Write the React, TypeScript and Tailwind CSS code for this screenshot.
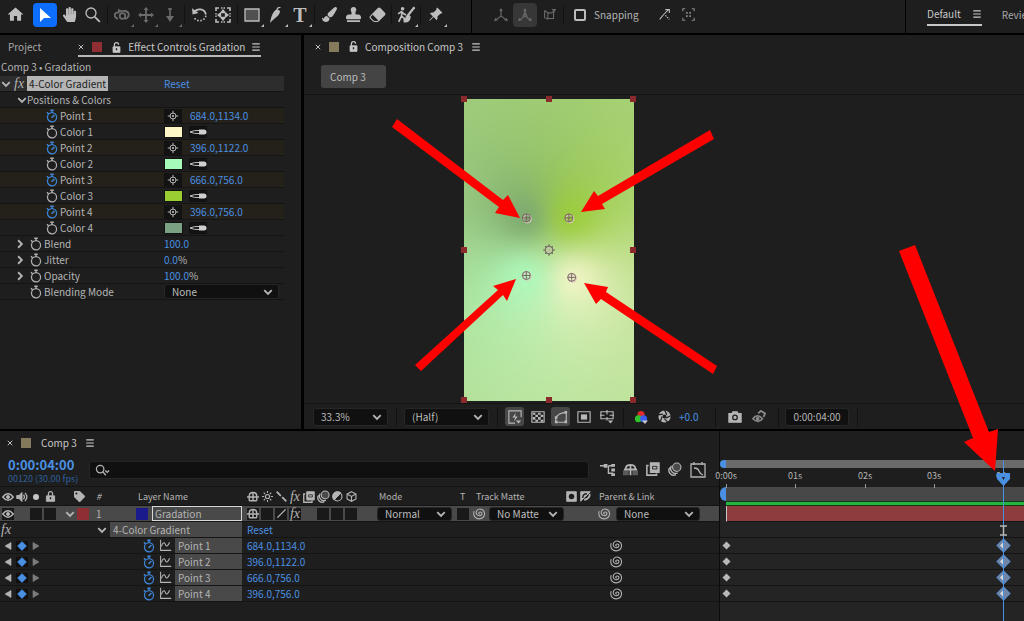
import { useLayoutEffect, useRef, type ReactNode } from "react";
import clsx from "clsx";
import { FaHandPaper, FaPaintBrush, FaStamp, FaTag } from "react-icons/fa";
import { BsEraserFill, BsPinAngleFill } from "react-icons/bs";
import { MdHome } from "react-icons/md";

const FRAME = { width: 170, height: 302 };
const COMP = { width: 1080, height: 1920 };
const SECOND = 277 / 4;

type Rgb = [number, number, number];

const points: {
  id: number;
  x: number;
  y: number;
  color: Rgb;
  swatch: string;
}[] = [
  { id: 1, x: 684, y: 1134, color: [255, 248, 208], swatch: "bg-[#fdf5c6]" },
  { id: 2, x: 396, y: 1122, color: [170, 255, 195], swatch: "bg-[#a5fbb9]" },
  { id: 3, x: 666, y: 756, color: [154, 205, 40], swatch: "bg-[#9acd32]" },
  { id: 4, x: 396, y: 756, color: [115, 158, 110], swatch: "bg-[#7ba283]" },
];

const formatPoint = (p: { x: number; y: number }) =>
  `${p.x.toFixed(1)},${p.y.toFixed(1)}`;

/* ---------- icons ---------- */

function Svg({
  size = 14,
  className,
  children,
}: {
  size?: number;
  className?: string;
  children: ReactNode;
}) {
  return (
    <svg
      width={size}
      height={size}
      viewBox="0 0 16 16"
      fill="none"
      stroke="currentColor"
      strokeWidth="1.3"
      className={clsx("shrink-0", className)}
      aria-hidden="true"
    >
      {children}
    </svg>
  );
}

function Chevron({ right }: { right?: boolean }) {
  return (
    <Svg size={10} className={right ? "-rotate-90" : ""}>
      <path d="M2 5l6 6 6-6" strokeWidth="3" />
    </Svg>
  );
}

function Stopwatch({ active }: { active?: boolean }) {
  return (
    <Svg size={14} className={active ? "text-[#3d87d9]" : "text-[#b0b0b0]"}>
      <circle cx="8" cy="9.4" r="5.2" strokeWidth="1.4" />
      <path d="M6 1.4h4M8 1.4v3M2.2 3.6l2 2" strokeWidth="1.6" />
      {active && <path d="M7.5 10l3.3-3.2" strokeWidth="1.8" />}
    </Svg>
  );
}

function Target() {
  return (
    <Svg size={12}>
      <circle cx="8" cy="8" r="4" />
      <circle cx="8" cy="8" r="1" fill="currentColor" />
      <path d="M8 1v4M8 11v4M1 8h4M11 8h4" />
    </Svg>
  );
}

function Dropper() {
  return (
    <svg width="18" height="12" viewBox="0 0 18 12" aria-hidden="true">
      <path d="M1 6q4-2 10-1.500v3Q5 8 1 6z" fill="none" stroke="#c4c4c4" />
      <path d="M10 3.500h5q2.500 0 2.500 2.500T15 8.500h-5z" fill="#d0d0d0" />
    </svg>
  );
}

function Spiral() {
  return (
    <Svg size={13}>
      <path
        d="M8.500 8.500C7 9 6.500 7 8 6.300c2-.8 3.500 1 2.800 2.700-1 2.500-5 2.500-6.300 0C3 6 5 2.500 8.500 2.500c4 0 6.500 3.500 5.500 7.500-1.500 5-8 6-11.500 2.500Q0 9 1.500 5"
        strokeWidth="1.300"
      />
    </Svg>
  );
}

function Menu() {
  return (
    <Svg size={10}>
      <path d="M2 3h12M2 8h12M2 13h12" strokeWidth="1.700" />
    </Svg>
  );
}

function OpenLock() {
  return (
    <Svg size={11}>
      <path d="M3 7h10v8H3z" fill="currentColor" />
      <path d="M5 7V4q0-3 3-3t3 3" strokeWidth="1.800" />
      <path d="M8 9v3" stroke="#1e1e1e" strokeWidth="2" />
    </Svg>
  );
}

function CloseButton({ label }: { label: string }) {
  return (
    <button type="button" aria-label={label} className="w-[14px]">
      <Svg size={6}>
        <path d="M2 2l12 12M14 2L2 14" strokeWidth="2.500" />
      </Svg>
    </button>
  );
}

function Eye() {
  return (
    <Svg size={12}>
      <path d="M1 8q7-8.500 14 0-7 8.500-14 0z" strokeWidth="1.900" />
      <circle cx="8" cy="8" r="2" fill="currentColor" />
    </Svg>
  );
}

function Shy() {
  return (
    <Svg size={12}>
      <path d="M3 7q0-5 5-5t5 5M0 8h16M8 2v12M3 13h10M3 8v5M13 8v5" strokeWidth="1.900" />
    </Svg>
  );
}

function Fx() {
  return (
    <span className="font-['Liberation_Serif',serif] text-[14px] leading-4 italic">
      fx
    </span>
  );
}

function Axis({ letter }: { letter?: boolean }) {
  return (
    <Svg size={14}>
      <path d="M8 3v6M8 9l-5 4M8 9l5 4" />
      <path d="M8 0l2 3.500H6zM0 15l1.500-4 3 3zM16 15l-1.500-4-3 3z" fill="currentColor" stroke="none" />
      {letter && <path d="M5.500 10L8 5l2.500 5" />}
    </Svg>
  );
}

function MotionBlur({ size = 14 }: { size?: number }) {
  return (
    <Svg size={size}>
      <circle cx="10" cy="6" r="4.800" fill="#4a4a4a" />
      <path d="M4 4.500a5.500 5.500 0 0 0 7 8M2 6.500a5.500 5.500 0 0 0 7 8" strokeWidth="1.600" />
    </Svg>
  );
}

function FrameBlend({ size = 14 }: { size?: number }) {
  return (
    <Svg size={size}>
      <path d="M5 1h10v11H5z" fill="currentColor" />
      <path d="M3 4H1v11h11v-2" strokeWidth="1.800" />
      <path d="M7.500 5h5v3h-5z" stroke="#1e1e1e" strokeWidth="1" />
    </Svg>
  );
}

function Graph() {
  return (
    <Svg size={13}>
      <path d="M2 1v13h13M3 9c2-6 4-5 5-2s3 2 5-3" />
    </Svg>
  );
}

/* ---------- small shared parts ---------- */

function ToolButton({
  label,
  children,
  tone = "normal",
  flyout,
}: {
  label: string;
  children: ReactNode;
  tone?: "normal" | "active" | "dim" | "pressed";
  flyout?: boolean;
}) {
  return (
    <button
      type="button"
      aria-label={label}
      className={clsx(
        "relative flex size-6 shrink-0 items-center justify-center rounded-sm",
        tone === "normal" && "text-[#bdbdbd]",
        tone === "active" && "bg-[#0d6efd] text-white",
        tone === "dim" && "text-[#6b6b6b]",
        tone === "pressed" && "bg-[#373737] text-[#6b6b6b]",
      )}
    >
      {children}
      {flyout && (
        <svg
          width="3"
          height="3"
          viewBox="0 0 3 3"
          className="absolute right-0 bottom-0"
          fill="currentColor"
        >
          <path d="M3 0v3H0z" />
        </svg>
      )}
    </button>
  );
}

function Divider() {
  return (
    <div className="flex h-5 w-[5px] shrink-0 justify-center">
      <div className="w-px bg-[#121212]" />
    </div>
  );
}

function Picker({
  label,
  value,
  className,
}: {
  label: string;
  value: string;
  className: string;
}) {
  return (
    <div className={clsx("relative shrink-0", className)}>
      <select
        aria-label={label}
        className="block size-full appearance-none rounded-[3px] border border-[#262626] bg-[#101010] pl-[7px] text-[10px] leading-3 text-[#bcbcbc]"
        defaultValue={value}
      >
        <option>{value}</option>
      </select>
      <span className="pointer-events-none absolute inset-y-0 right-[6px] flex items-center">
        <Chevron />
      </span>
    </div>
  );
}

/* ---------- toolbar ---------- */

function Toolbar() {
  return (
    <header className="flex h-[33px] shrink-0 items-stretch gap-px overflow-hidden bg-black whitespace-nowrap">
      <div className="flex w-[471px] shrink-0 items-center bg-[#1e1e1e] pb-1 pl-[3px]">
        <ToolButton label="Home">
          <MdHome size={19} />
        </ToolButton>
        <div className="ml-[6px] flex items-center">
          <ToolButton label="Selection tool" tone="active">
            <Svg size={16}>
              <path d="M3 1v14l4-4h7z" fill="currentColor" stroke="none" />
            </Svg>
          </ToolButton>
          <ToolButton label="Hand tool">
            <FaHandPaper size={15} />
          </ToolButton>
          <ToolButton label="Zoom tool">
            <Svg size={16}>
              <circle cx="6" cy="6" r="5" />
              <path d="M9.800 9.800l5 5" strokeWidth="1.800" />
            </Svg>
          </ToolButton>
          <Divider />
          <ToolButton label="Orbit tool" tone="dim" flyout>
            <Svg size={16}>
              <path d="M4 12C-1 10 0 5 5 5.500M11 12c5-2 5-7 0-8-3-.5-5 1-7 0" strokeWidth="1.800" />
              <path d="M4 1.500v5L7.500 4z" fill="currentColor" stroke="none" />
              <circle cx="8.500" cy="9" r="2.800" strokeWidth="1.800" />
            </Svg>
          </ToolButton>
          <ToolButton label="Pan tool" tone="dim" flyout>
            <Svg size={16}>
              <path d="M8 2v12M2 8h12" strokeWidth="1.800" />
              <path d="M8 0l2.500 3h-5zM8 16l2.500-3h-5zM0 8l3-2.500v5zM16 8l-3-2.500v5z" fill="currentColor" stroke="none" />
            </Svg>
          </ToolButton>
          <ToolButton label="Dolly tool" tone="dim" flyout>
            <Svg size={16}>
              <path d="M8 1v10M6 2h4" strokeWidth="1.600" />
              <path d="M4 9h8l-4 6z" fill="currentColor" stroke="none" />
            </Svg>
          </ToolButton>
          <Divider />
          <ToolButton label="Rotation tool">
            <Svg size={17}>
              <path d="M3 6a6 6 0 0 1 11 2" strokeWidth="1.600" />
              <path d="M14 9a6 6 0 0 1-11 2" strokeDasharray="1.500 1.500" strokeWidth="1.600" />
              <path d="M1 2l.5 6L7 6.500z" fill="currentColor" stroke="none" />
            </Svg>
          </ToolButton>
          <ToolButton label="Pan behind tool">
            <Svg size={16}>
              <path d="M1 4V1h3M12 1h3v3M15 12v3h-3M4 15H1v-3" strokeWidth="1.600" />
              <path d="M6 1h4M6 15h4M1 6v4M15 6v4" strokeDasharray="1.500 1" />
              <path d="M8 3l2 2.500H6zM8 13l2-2.500H6zM3 8l2.500-2v4zM13 8l-2.500-2v4z" fill="currentColor" />
            </Svg>
          </ToolButton>
          <Divider />
          <ToolButton label="Rectangle tool" flyout>
            <Svg size={16}>
              <path d="M1 2h14v12H1z" fill="#505050" />
            </Svg>
          </ToolButton>
          <ToolButton label="Pen tool" flyout>
            <Svg size={16}>
              <path d="M2 16C3 11 4 5 9 2l3 2C12 9 6 11 2 16z" fill="currentColor" stroke="none" />
              <path d="M9 2q2-2 3.500-1.500" strokeWidth="1.400" />
            </Svg>
          </ToolButton>
          <ToolButton label="Type tool" flyout>
            <span className="font-['Liberation_Serif',serif] text-[20px] leading-5 font-bold">
              T
            </span>
          </ToolButton>
          <Divider />
          <ToolButton label="Brush tool">
            <FaPaintBrush size={15} />
          </ToolButton>
          <ToolButton label="Clone stamp tool">
            <FaStamp size={15} />
          </ToolButton>
          <ToolButton label="Eraser tool">
            <BsEraserFill size={17} />
          </ToolButton>
          <Divider />
          <ToolButton label="Roto brush tool" flyout>
            <Svg size={18}>
              <circle cx="5" cy="2.500" r="1.600" fill="currentColor" stroke="none" />
              <path d="M1 7l3-2 2 2 2 1M4.500 5L4 9l-2.500 5M4 9l2.500 2v3" strokeWidth="1.500" />
              <path d="M15.500 1L10 8" strokeWidth="2" />
              <path d="M9.500 8l2 1.500c0 3-2 4.500-4.500 4.500 1-1.500.5-4.500 2.500-6z" fill="currentColor" />
            </Svg>
          </ToolButton>
          <Divider />
          <ToolButton label="Puppet pin tool" flyout>
            <BsPinAngleFill size={15} />
          </ToolButton>
        </div>
      </div>

      <div className="flex min-w-0 flex-1 items-center bg-[#1e1e1e] pb-1 pl-[17px]">
        <ToolButton label="Local axis" tone="dim">
          <Axis />
        </ToolButton>
        <ToolButton label="World axis" tone="pressed">
          <Axis letter />
        </ToolButton>
        <ToolButton label="View axis" tone="dim">
          <Svg size={13}>
            <path d="M2 3v9l4 2M2 3l4 3h5M15 2l-2 4v7H6V6M11 6l4-4h-4" />
          </Svg>
        </ToolButton>
        <Divider />
        <label className="ml-2 flex items-center gap-2 leading-4">
          <input
            type="checkbox"
            className="size-3 appearance-none rounded-[2px] border-2 border-[#bdbdbd]"
          />
          Snapping
        </label>
        <div className="ml-[14px] flex">
          <ToolButton label="Snap to edges">
            <Svg size={13}>
              <path d="M2 14l5-6M7 8l6-6M9 2h5v4" />
              <path d="M9 9l5 5" strokeDasharray="2 1" />
            </Svg>
          </ToolButton>
          <ToolButton label="Snap to features">
            <Svg size={13} className="text-[#8c8c8c]">
              <path d="M1 4V1h3M12 1h3v3M15 12v3h-3M4 15H1v-3" />
              <path d="M5 5h2v2H5zM9 5h2v2H9zM5 9h2v2H5zM9 9h2v2H9z" fill="currentColor" stroke="none" />
            </Svg>
          </ToolButton>
        </div>
      </div>

      <nav className="flex w-[118px] shrink-0 items-center gap-5 bg-[#1e1e1e] pb-0.5 pl-[21px] leading-4">
        <div className="flex shrink-0 items-center gap-[11px] border-b-2 border-[#c8c8c8] pb-0.5 text-[#c8c8c8]">
          <a href="#default">Default</a>
          <Menu />
        </div>
        <a href="#review" className="shrink-0 pb-0.5 text-[#a8a8a8]">
          Review
        </a>
      </nav>
    </header>
  );
}

/* ---------- effect controls ---------- */

function EffectRow({
  name,
  keyed,
  nested,
  expandable,
  children,
}: {
  name: string;
  keyed?: boolean;
  nested?: boolean;
  expandable?: boolean;
  children: ReactNode;
}) {
  return (
    <div
      className={clsx(
        "flex h-4 items-center border-b border-[#141414]",
        keyed && "bg-[#24211b]",
      )}
    >
      <div
        className={clsx(
          "flex w-[164px] shrink-0 items-center gap-px",
          nested ? "pl-[45px]" : "pl-[15px]",
        )}
      >
        {!nested && (
          <span className="flex w-[13px]">
            {expandable && <Chevron right />}
          </span>
        )}
        <Stopwatch active={keyed} />
        <span>{name}</span>
      </div>
      {children}
    </div>
  );
}

function EffectControls() {
  return (
    <section className="w-[301px] shrink-0 bg-[#1e1e1e]">
      <div className="flex h-[22px] items-end pl-2">
        <a href="#project" className="pb-[2px] leading-4 text-[#a8a8a8]">
          Project
        </a>
        <div className="ml-[37px] flex items-center border-b-2 border-[#b8b8b8] text-[#c8c8c8]">
          <CloseButton label="Close panel" />
          <span className="size-[10px] bg-[#8f2f33]" />
          <span className="mr-[6px] ml-[9px]">
            <OpenLock />
          </span>
          <span className="leading-4">Effect Controls Gradation</span>
          <span className="ml-[6px]">
            <Menu />
          </span>
        </div>
      </div>
      <p className="h-[19px] pl-[1px] leading-[19px]">Comp 3 • Gradation</p>

      <div className="w-[284px]">
        <div className="flex h-4 items-center border-b border-[#141414] bg-[#2d2d2d]">
          <div className="flex w-[164px] shrink-0 items-center gap-[3px] pl-[1px]">
            <Chevron />
            <Fx />
            <span className="bg-[#b4b4b4] px-[2px] leading-[15px] text-[#1c1c1c]">
              4-Color Gradient
            </span>
          </div>
          <button type="button" className="text-[#4a90e2]">
            Reset
          </button>
        </div>
        <div className="flex h-4 items-center border-b border-[#141414] pl-[17px]">
          <Chevron />
          Positions &amp; Colors
        </div>
        {points.map((p) => (
          <div key={p.id}>
            <EffectRow name={`Point ${p.id}`} keyed nested>
              <button
                type="button"
                aria-label={`Pick point ${p.id}`}
                className="flex h-[14px] w-[18px] items-center justify-center bg-[#121212]"
              >
                <Target />
              </button>
              <span className="ml-2 text-[#4a90e2]">{formatPoint(p)}</span>
            </EffectRow>
            <EffectRow name={`Color ${p.id}`} nested>
              <button
                type="button"
                aria-label={`Color ${p.id} swatch`}
                className={clsx("h-3 w-[19px] border border-[#121212]", p.swatch)}
              />
              <button
                type="button"
                aria-label={`Color ${p.id} eyedropper`}
                className="ml-[6px] bg-[#121212]"
              >
                <Dropper />
              </button>
            </EffectRow>
          </div>
        ))}
        <EffectRow name="Blend" expandable>
          <span className="text-[#4a90e2]">100.0</span>
        </EffectRow>
        <EffectRow name="Jitter" expandable>
          <span className="text-[#4a90e2]">0.0</span>%
        </EffectRow>
        <EffectRow name="Opacity" expandable>
          <span className="text-[#4a90e2]">100.0</span>%
        </EffectRow>
        <EffectRow name="Blending Mode">
          <Picker label="Blending Mode" value="None" className="h-[15px] w-[115px]" />
        </EffectRow>
      </div>
    </section>
  );
}

/* ---------- composition viewer ---------- */

// Every pixel is the average of the four colors weighted by inverse distance.
function GradientCanvas() {
  const ref = useRef<HTMLCanvasElement>(null);

  useLayoutEffect(() => {
    const ctx = ref.current?.getContext("2d");
    if (!ctx) return;
    const { width, height } = FRAME;
    const image = ctx.createImageData(width, height);
    for (let y = 0; y < height; y++) {
      for (let x = 0; x < width; x++) {
        let total = 0;
        const sum = [0, 0, 0];
        for (const p of points) {
          const dx = x - (p.x / COMP.width) * width;
          const dy = y - (p.y / COMP.height) * height;
          const weight = 1 / (dx * dx + dy * dy + 280);
          total += weight;
          p.color.forEach((c, i) => (sum[i] += c * weight));
        }
        const at = (y * width + x) * 4;
        sum.forEach((c, i) => (image.data[at + i] = c / total));
        image.data[at + 3] = 255;
      }
    }
    ctx.putImageData(image, 0, 0);
  }, []);

  return <canvas ref={ref} width={FRAME.width} height={FRAME.height} />;
}

const handles = [
  [0, 0],
  [85, 0],
  [169, 0],
  [0, 151],
  [169, 151],
  [0, 301],
  [85, 301],
  [169, 301],
];

const arrows = [
  "-67,20 39,101 44,96 56,119 31,114 35,108 -72,28",
  "246,31 250,40 138,105 141,110 117,113 130,92 134,97",
  "-49,266 34,191 29,187 52,180 43,202 39,196 -43,272",
  "253,267 142,193 144,188 120,184 132,205 137,200 249,275",
];

function FrameOverlay() {
  return (
    <svg
      className="pointer-events-none absolute inset-0 overflow-visible"
      width={FRAME.width}
      height={FRAME.height}
      aria-hidden="true"
    >
      {handles.map(([x, y]) => (
        <rect key={`${x}-${y}`} x={x - 3} y={y - 3} width="6" height="6" fill="#8a2a2c" />
      ))}
      {points.map((p) => (
        <g
          key={p.id}
          transform={`translate(${(p.x / COMP.width) * FRAME.width} ${(p.y / COMP.height) * FRAME.height})`}
          fill="none"
          stroke="#7d6566"
        >
          <circle cx="1" cy="1" r="4" stroke="#e0c8c8" />
          <circle r="4" />
          <path d="M-4 0h8M0-4v8" />
        </g>
      ))}
      <g transform="translate(85 151)" fill="none" stroke="#6f6a60">
        <circle r="4" fill="#b9c79a" />
        <path d="M0-6v3M0 3v3M-6 0h3M3 0h3M-4-4l2 2M4-4l-2 2M-4 4l2-2M4 4l-2-2" />
      </g>
      {arrows.map((a) => (
        <polygon key={a} points={a} fill="#fe0000" />
      ))}
    </svg>
  );
}

function Composition() {
  return (
    <section className="flex min-w-0 flex-1 flex-col bg-[#1e1e1e]">
      <div className="flex h-[23px] items-center pl-[11px] text-[#c8c8c8]">
        <CloseButton label="Close composition" />
        <span className="size-[10px] bg-[#857a5c]" />
        <span className="mr-[6px] ml-[9px]">
          <OpenLock />
        </span>
        <span className="leading-4">Composition Comp 3</span>
        <span className="ml-2">
          <Menu />
        </span>
      </div>
      <div className="flex h-[37px] items-start border-b border-[#141414] pt-[7px] pl-[17px]">
        <button
          type="button"
          className="h-[23px] w-[65px] rounded-[3px] bg-[#444444] pl-[9px] text-left leading-4 text-[#bcbcbc]"
        >
          Comp 3
        </button>
      </div>
      <div className="border-b border-[#141414] pt-1 pb-[2px] pl-[160px]">
        <div className="relative h-[302px] w-[170px]">
          <GradientCanvas />
          <FrameOverlay />
        </div>
      </div>
      <div className="flex h-[25px] items-center pl-[9px] whitespace-nowrap">
        <Picker label="Magnification" value="33.3%" className="h-[18px] w-[75px]" />
        <span className="ml-[6px]">
          <Divider />
        </span>
        <Picker label="Resolution" value="(Half)" className="ml-[5px] h-[18px] w-[85px]" />
        <span className="mr-[5px] ml-[6px]">
          <Divider />
        </span>
        <div className="flex gap-1">
          <FooterIcon label="Fast previews" on>
            <path d="M15 8V1H1v14h7" />
            <path d="M9 3L5 8.500h3L7 13l4-5.500H8z" fill="currentColor" stroke="none" />
            <path d="M9 12h6l-3 3.500z" fill="currentColor" stroke="none" />
          </FooterIcon>
          <FooterIcon label="Transparency grid">
            <path d="M1 2h14v12H1z" />
            <path d="M2 3h3v2.500H2zM8 3h3v2.500H8zM5 5.500h3V8H5zM11 5.500h3V8h-3zM2 8h3v3H2zM8 8h3v3H8zM5 11h3v2.500H5zM11 11h3v2.500h-3z" fill="currentColor" stroke="none" />
          </FooterIcon>
          <FooterIcon label="Mask paths" on>
            <path d="M2 14V9q3-6 12-6v11z" />
            <path d="M1 12h3v3H1zM12 1h3v3h-3zM12 12h3v3h-3zM1 7h3v3H1z" fill="currentColor" stroke="none" />
          </FooterIcon>
          <FooterIcon label="Region of interest">
            <path d="M1 2h14v12H1z" />
            <path d="M4.500 5h7v6h-7z" fill="currentColor" stroke="none" />
          </FooterIcon>
          <FooterIcon label="Grid and guides">
            <path d="M1 2h14v8H1zM8 0v5M8 8v4M0 6h5M11 6h5" />
            <path d="M9 12h6l-3 3.500z" fill="currentColor" stroke="none" />
          </FooterIcon>
        </div>
        <span className="mx-[5px]">
          <Divider />
        </span>
        <button type="button" aria-label="Channels" className="flex w-5 justify-center">
          <svg width="14" height="14" viewBox="0 0 16 16">
            <circle cx="8" cy="5" r="4" fill="#e02b2b" />
            <circle cx="5" cy="10" r="4" fill="#2fc42f" />
            <circle cx="11" cy="10" r="4" fill="#3a5ff0" />
            <path d="M9 12h7l-3.500 4z" fill="#c8c8c8" />
          </svg>
        </button>
        <button type="button" aria-label="Exposure" className="ml-[3px] flex w-5 justify-center">
          <Svg size={13}>
            <circle cx="8" cy="8" r="5" strokeWidth="5" />
            <path d="M8 0l3 6M15.500 7l-5.500 3M12 15l-4-4M3 14l2-6M0 6l6-1" stroke="#1e1e1e" strokeWidth="1.500" />
          </Svg>
        </button>
        <span className="ml-[5px] text-[#4a90e2]">+0.0</span>
        <span className="mr-[5px] ml-[15px]">
          <Divider />
        </span>
        <button type="button" aria-label="Take snapshot" className="flex w-6 justify-center">
          <Svg size={14}>
            <path d="M1 4h3.500l1-2h5l1 2H15v10H1z" fill="currentColor" />
            <circle cx="8" cy="8.500" r="2.600" stroke="#1e1e1e" strokeWidth="1.500" />
          </Svg>
        </button>
        <button type="button" aria-label="Show snapshot" className="flex w-6 justify-center text-[#8a8a8a]">
          <Svg size={14}>
            <path d="M1 10q5-7 11 0-5 6-11 0z" strokeWidth="1.800" />
            <circle cx="6.500" cy="10" r="1.500" fill="currentColor" />
            <path d="M7 4l3-3 5 3-2 4" strokeWidth="2" />
          </Svg>
        </button>
        <span className="mr-1 ml-[5px]">
          <Divider />
        </span>
        <span className="h-[18px] rounded-[3px] border border-[#262626] bg-[#101010] px-[7px] leading-4">
          0:00:04:00
        </span>
        <span className="ml-[6px]">
          <Divider />
        </span>
      </div>
    </section>
  );
}

function FooterIcon({
  label,
  on,
  children,
}: {
  label: string;
  on?: boolean;
  children: ReactNode;
}) {
  return (
    <button
      type="button"
      aria-label={label}
      className={clsx(
        "flex size-[19px] items-center justify-center rounded-[3px] text-[#b8b8b8]",
        on && "bg-[#474747]",
      )}
    >
      <Svg size={14}>{children}</Svg>
    </button>
  );
}

/* ---------- timeline ---------- */

function Switch({ children, boxed }: { children?: ReactNode; boxed?: boolean }) {
  return (
    <span className="flex h-[13px] w-[14px] shrink-0 items-center justify-center">
      <span
        className={clsx(
          "flex h-3 items-center justify-center",
          boxed && "w-3 bg-[#191919]",
        )}
      >
        {children}
      </span>
    </span>
  );
}

function LayerHeader() {
  return (
    <div className="grid h-5 grid-cols-[62px_30px_42px_108px_132px_82px_17px_123px_1fr] items-center border-y border-[#141414] pt-px text-[9px] leading-3">
      <div className="flex pl-px">
        <Switch>
          <Eye />
        </Switch>
        <Switch>
          <Svg size={12}>
            <path d="M1 6h3l4-4v12l-4-4H1z" fill="currentColor" />
            <path d="M10 5q2.500 3 0 6M12 2.500q5 5.500 0 11" strokeWidth="1.700" />
          </Svg>
        </Switch>
        <Switch>
          <span className="size-[6px] rounded-full bg-[#c4c4c4]" />
        </Switch>
        <Switch>
          <Svg size={11}>
            <path d="M2 7h12v8H2z" fill="currentColor" />
            <path d="M5 7V4q0-3 3-3t3 3v3" strokeWidth="1.800" />
            <path d="M8 9v3" stroke="#1e1e1e" strokeWidth="2" />
          </Svg>
        </Switch>
      </div>
      <div className="flex justify-center pl-1">
        <FaTag size={11} />
      </div>
      <div className="pl-1 italic">#</div>
      <div className="pl-1">Layer Name</div>
      <div className="flex pl-1">
        <Switch>
          <Shy />
        </Switch>
        <Switch>
          <Svg size={11}>
            <circle cx="8" cy="8" r="3" strokeWidth="1.600" />
            <path d="M8 0v3M8 13v3M0 8h3M13 8h3M2.500 2.500l2 2M11.500 11.500l2 2M13.500 2.500l-2 2M4.500 11.500l-2 2" strokeWidth="1.600" />
          </Svg>
        </Switch>
        <Switch>
          <Svg size={11}>
            <path d="M1 1l6 6M9 9l6 6" strokeWidth="2.500" />
          </Svg>
        </Switch>
        <Switch>
          <Fx />
        </Switch>
        <Switch>
          <FrameBlend size={12} />
        </Switch>
        <Switch>
          <MotionBlur size={13} />
        </Switch>
        <Switch>
          <Svg size={11}>
            <circle cx="8" cy="8" r="6.500" strokeWidth="1.600" />
            <path d="M13 3a7 7 0 0 0-10 10z" fill="currentColor" />
          </Svg>
        </Switch>
        <Switch>
          <Svg size={11}>
            <path d="M8 1l6.500 3.500v7L8 15l-6.500-3.500v-7zM1.500 4.500L8 8l6.500-3.500M8 8v7" strokeWidth="1.600" />
          </Svg>
        </Switch>
      </div>
      <div className="pl-[5px]">Mode</div>
      <div className="pl-1">T</div>
      <div className="flex items-center pl-[3px]">
        Track Matte
        <span className="ml-auto flex gap-[3px] pr-[5px]">
          <Svg size={11}>
            <path d="M1 1h14v14H1z" fill="currentColor" />
            <circle cx="8" cy="8" r="4" fill="#1e1e1e" stroke="none" />
          </Svg>
          <Svg size={11}>
            <path d="M1 1h14L1 15z" fill="currentColor" />
            <path d="M14 4q1 7-8 9" strokeWidth="2.500" />
            <path d="M4 10q0-6 6-6" stroke="#1e1e1e" strokeWidth="2" />
          </Svg>
        </span>
      </div>
      <div className="pl-[3px]">Parent &amp; Link</div>
    </div>
  );
}

function LayerRow() {
  return (
    <div className="grid h-4 grid-cols-[62px_30px_42px_108px_132px_82px_17px_123px_1fr] items-center border-b border-[#141414] bg-[#494949]">
      <div className="flex pl-px">
        <Switch boxed>
          <Eye />
        </Switch>
        <Switch />
        <Switch boxed />
        <Switch boxed />
      </div>
      <div className="flex items-center gap-0.5 pl-[3px]">
        <Chevron />
        <span className="size-3 bg-[#8f2f33]" />
      </div>
      <div className="pl-1">1</div>
      <div className="flex items-center gap-1 pl-[2px]">
        <span className="size-3 shrink-0 bg-[#1a1a8c]" />
        <span className="h-[15px] flex-1 border border-[#d8d8d8] bg-[#494949] pl-0.5 leading-[13px]">
          Gradation
        </span>
      </div>
      <div className="flex pl-1">
        <Switch boxed>
          <Shy />
        </Switch>
        <Switch boxed />
        <Switch boxed>
          <Svg size={11}>
            <path d="M2 14L14 2" strokeWidth="2" />
          </Svg>
        </Switch>
        <Switch boxed>
          <Fx />
        </Switch>
        <Switch />
        <Switch boxed />
        <Switch boxed />
        <Switch boxed />
      </div>
      <div className="pl-[3px]">
        <Picker label="Mode" value="Normal" className="h-[14px] w-[75px]" />
      </div>
      <Switch boxed />
      <div className="flex items-center gap-[3px]">
        <Spiral />
        <Picker label="Track Matte" value="No Matte" className="h-[14px] w-[75px]" />
      </div>
      <div className="flex items-center gap-[5px] pl-[2px]">
        <Spiral />
        <Picker label="Parent" value="None" className="h-[14px] w-[84px]" />
      </div>
    </div>
  );
}

function PropertyRow({ name, value }: { name: string; value: string }) {
  return (
    <div className="flex h-4 items-center border-b border-[#141414]">
      <div className="flex w-[142px] shrink-0 items-center">
        <button type="button" aria-label="Previous keyframe" className="flex w-[15px] justify-center">
          <Svg size={8}>
            <path d="M14 1v14L2 8z" fill="currentColor" />
          </Svg>
        </button>
        <button type="button" aria-label="Toggle keyframe" className="ml-px flex w-3 justify-center bg-[#101010] text-[#4a90e2]">
          <Svg size={10}>
            <path d="M8 1l7 7-7 7-7-7z" fill="currentColor" />
          </Svg>
        </button>
        <button type="button" aria-label="Next keyframe" className="flex w-[15px] justify-center text-[#7c7c7c]">
          <Svg size={8}>
            <path d="M2 1v14l12-7z" fill="currentColor" />
          </Svg>
        </button>
      </div>
      <Stopwatch active />
      <span className="mr-[3px] ml-[3px]">
        <Graph />
      </span>
      <span className="h-[15px] w-[67px] shrink-0 bg-[#494949] pl-[3px] leading-[15px]">
        {name}
      </span>
      <span className="w-[368px] shrink-0 pl-[5px] text-[#4a90e2]">{value}</span>
      <Spiral />
    </div>
  );
}

function Keyframe({ selected }: { selected?: boolean }) {
  return selected ? (
    <svg width="15" height="15" viewBox="0 0 15 15" className="block">
      <path d="M7.500 .5l7 7-7 7-7-7z" fill="#6f86a8" stroke="#3f74b5" />
      <path d="M7.500 4L4 7.500 7.500 11z" fill="#d8d8d8" />
    </svg>
  ) : (
    <svg width="9" height="9" viewBox="0 0 9 9" className="block">
      <path d="M4.500 .5l4 4-4 4-4-4z" fill="#b8b8b8" />
    </svg>
  );
}

function Tracks() {
  return (
    <div className="relative min-w-0 flex-1 border-l border-[#0c0c0c] bg-[#1e1e1e]">
      <div className="mt-[29px] flex h-2 overflow-hidden">
        <span className="w-[6px] shrink-0 rounded-l-full bg-[#4a90e2]" />
        <span className="flex-1 bg-[#6a6a6a]" />
      </div>
      <div className="relative h-[19px] text-[9px] leading-4">
        {["0:00s", "01s", "02s", "03s", "04s"].map((label, second) => (
          <span
            key={label}
            className="absolute top-0 flex h-[19px] w-10 flex-col items-center justify-between"
            style={{ left: Math.round(6 + second * SECOND) - 20 }}
          >
            {label}
            <span className="h-1 w-px shrink-0 bg-[#9a9a9a]" />
          </span>
        ))}
      </div>
      <div className="flex h-[14px]">
        <span className="w-[6px] rounded-l-md bg-[#4a90e2]" />
        <span className="flex-1 bg-[#484848]" />
      </div>
      <div className="ml-[6px] h-[5px] border-y border-[#0f3a16] bg-[#25b540]" />
      <div className="bg-[#242424]">
        <div className="ml-[6px] h-4 border-b border-l border-[#141414] border-l-[#c8c8c8] bg-[#8d3d3d]" />
        <div className="h-4 border-b border-[#141414]" />
        {points.map((p) => (
          <div key={p.id} className="relative h-4 border-b border-[#141414]">
            <span className="absolute top-[3px] left-[2px]">
              <Keyframe />
            </span>
            <span
              className="absolute top-0"
              style={{ left: Math.round(6 + 4 * SECOND) - 7 }}
            >
              <Keyframe selected />
            </span>
          </div>
        ))}
        <div className="h-5" />
      </div>
      {/* playhead */}
      <div
        className="pointer-events-none absolute top-[29px] bottom-0 w-px bg-[#4a90e2]"
        style={{ left: 6 + 4 * SECOND }}
      />
      <svg
        className="pointer-events-none absolute inset-0 z-10 overflow-visible"
        width="300"
        height="190"
        aria-hidden="true"
      >
        <path d="M277 42h13v6l-6.500 7-6.500-7z" fill="#4a90e2" />
        <path d="M282 46h3l-1.500 3z" fill="#1e1e1e" />
        <path d="M280 95h7M280 104h7M283.500 95v9" stroke="#b8b8b8" strokeWidth="1.500" />
        <polygon points="195,-186 269,1 278,-2 275,40 244,11 253,7 179,-180" fill="#fe0000" />
      </svg>
    </div>
  );
}

function Timeline() {
  return (
    <section className="flex flex-1 bg-[#1e1e1e]">
      <div className="w-[719px] shrink-0">
        <div className="flex h-[23px] items-center pl-[7px] text-[#c8c8c8]">
          <CloseButton label="Close timeline" />
          <span className="size-[10px] bg-[#857a5c]" />
          <span className="ml-[10px] leading-4">Comp 3</span>
          <span className="ml-2">
            <Menu />
          </span>
        </div>
        <div className="flex h-8 items-center">
          <div className="w-[89px] shrink-0 pl-2">
            <div className="text-[13px] leading-4 font-bold text-[#4a90e2]">
              0:00:04:00
            </div>
            <div className="text-[9px] leading-[11px] whitespace-nowrap text-[#2c5f9c]">
              00120 (30.00 fps)
            </div>
          </div>
          <label className="flex h-[18px] w-[500px] shrink-0 items-center rounded-[3px] border border-[#262626] bg-[#101010] pl-[5px]">
            <Svg size={15}>
              <circle cx="5.500" cy="6.500" r="4" />
              <path d="M8.500 9.500l3 3.500M11 8l2 2 2-2" strokeWidth="1.500" />
            </Svg>
            <input
              type="text"
              aria-label="Search layers"
              className="h-4 min-w-0 flex-1 bg-transparent outline-none"
            />
          </label>
          <div className="ml-[11px] flex gap-2">
            <Svg size={15}>
              <path d="M0 4h7M9 4h5M9 4v8h5" strokeWidth="1.500" />
              <path d="M4 2h4v4H4zM12 2h4v3h-4zM12 7h4v3h-4zM12 12h4v3h-4z" fill="currentColor" stroke="none" />
            </Svg>
            <Svg size={15}>
              <path d="M0 9h6v5H0zM10 9h6v5h-6z" fill="#5a5a5a" stroke="none" />
              <path d="M3 7q0-4 5-4t5 4M8 2v12M1 8h14" strokeWidth="1.900" />
            </Svg>
            <FrameBlend />
            <MotionBlur />
            <Svg size={16}>
              <path d="M1 2h14v13H1zM4 6q4 0 5 3t4 4M4 0v3M12 0v3" />
            </Svg>
          </div>
        </div>
        <LayerHeader />
        <LayerRow />
        <div className="flex h-4 items-center border-b border-[#141414]">
          <span className="w-[97px] pl-px">
            <Fx />
          </span>
          <Chevron />
          <span className="ml-[3px] h-[15px] w-[132px] bg-[#494949] pl-[3px] leading-[15px]">
            4-Color Gradient
          </span>
          <button type="button" className="pl-[5px] text-[#4a90e2]">
            Reset
          </button>
        </div>
        {points.map((p) => (
          <PropertyRow key={p.id} name={`Point ${p.id}`} value={formatPoint(p)} />
        ))}
      </div>
      <Tracks />
    </section>
  );
}

export default function App() {
  return (
    <div className="flex min-h-screen flex-col gap-0.5 overflow-hidden bg-black font-['Noto_Sans_CJK_JP',sans-serif] text-[10px] leading-[15px] text-[#b4b4b4]">
      <Toolbar />
      <main className="flex shrink-0 gap-[3px]">
        <EffectControls />
        <Composition />
      </main>
      <Timeline />
    </div>
  );
}
